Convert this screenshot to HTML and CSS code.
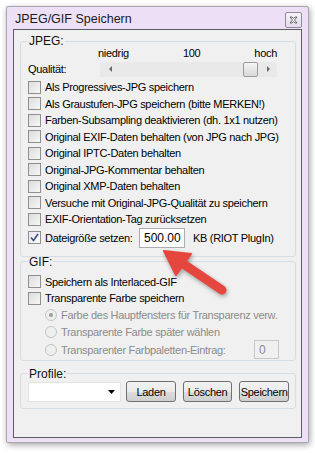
FILE: index.html
```html
<!DOCTYPE html>
<html lang="de">
<head>
<meta charset="utf-8">
<title>JPEG/GIF Speichern</title>
<link rel="stylesheet" href="styles.css">
</head>
<body>
<div class="window">
  <div class="titlebar">
    <span class="title">JPEG/GIF Speichern</span>
    <span class="close"><svg width="9" height="8" viewBox="0 0 9 8"><path d="M1 1h2l1.5 1.5L6 1h2L5.5 4 8 7H6L4.5 5.5 3 7H1l2.5-3z" fill="#fff" stroke="#555" stroke-width="0.9" stroke-linejoin="round"/></svg></span>
  </div>
  <div class="client">
    <fieldset class="group group-jpeg">
      <legend>JPEG:</legend>
      <div class="scale-labels"><span>niedrig</span><span>100</span><span>hoch</span></div>
      <div class="slider-row">
        <span class="slider-label">Qualität:</span>
        <div class="slider">
          <span class="arr arr-l"></span>
          <span class="track"><span class="thumb"></span></span>
          <span class="arr arr-r"></span>
        </div>
      </div>
      <div class="check"><span class="box"></span>Als Progressives-JPG speichern</div>
      <div class="check"><span class="box"></span>Als Graustufen-JPG speichern (bitte MERKEN!)</div>
      <div class="check"><span class="box"></span>Farben-Subsampling deaktivieren (dh. 1x1 nutzen)</div>
      <div class="check"><span class="box"></span>Original EXIF-Daten behalten (von JPG nach JPG)</div>
      <div class="check"><span class="box"></span>Original IPTC-Daten behalten</div>
      <div class="check"><span class="box"></span>Original-JPG-Kommentar behalten</div>
      <div class="check"><span class="box"></span>Original XMP-Daten behalten</div>
      <div class="check"><span class="box"></span>Versuche mit Original-JPG-Qualität zu speichern</div>
      <div class="check"><span class="box"></span>EXIF-Orientation-Tag zurücksetzen</div>
      <div class="check check-size">
        <span class="box checked"><svg width="9" height="9" viewBox="0 0 9 9"><path d="M1 4.5l2.5 3L8 1" fill="none" stroke="#3D4F7A" stroke-width="1.6"/></svg></span>
        <span class="size-label">Dateigröße setzen:</span>
        <span class="field field-size">500.00</span>
        <span class="unit">KB (RIOT PlugIn)</span>
      </div>
    </fieldset>
    <fieldset class="group group-gif">
      <legend>GIF:</legend>
      <div class="check"><span class="box"></span>Speichern als Interlaced-GIF</div>
      <div class="check"><span class="box"></span>Transparente Farbe speichern</div>
      <div class="radio"><span class="dot on"></span>Farbe des Hauptfensters für Transparenz verw.</div>
      <div class="radio"><span class="dot"></span>Transparente Farbe später wählen</div>
      <div class="radio radio-last"><span class="dot"></span>Transparenter Farbpaletten-Eintrag:<span class="field field-idx">0</span></div>
    </fieldset>
    <fieldset class="group group-profile">
      <legend>Profile:</legend>
      <div class="profile-row">
        <span class="combo"><svg width="7" height="4" viewBox="0 0 7 4"><path d="M0 0h7L3.5 4z" fill="#000"/></svg></span>
        <span class="btn">Laden</span>
        <span class="btn">Löschen</span>
        <span class="btn">Speichern</span>
      </div>
    </fieldset>
  </div>
</div>
<svg class="arrow" width="315" height="453" viewBox="0 0 315 453">
  <line x1="222" y1="290" x2="182" y2="263" stroke="#E5463D" stroke-width="9" stroke-linecap="round"/>
  <path d="M164 251 L191 254 L176 275 Z" fill="#E5463D" stroke="#E5463D" stroke-width="2" stroke-linejoin="round"/>
</svg>
</body>
</html>
```
FILE: styles.css
```css
html, body {
  margin: 0;
  padding: 0;
  background: #ffffff;
}
body {
  font-family: "Liberation Sans", Arial, sans-serif;
  font-size: 11px;
  letter-spacing: -0.3px;
  color: #000;
  width: 315px;
  height: 453px;
  position: relative;
  overflow: hidden;
}
.window {
  margin: 6px 0 0 6px;
  width: 301px;
  height: 435px;
  border: 1px solid #A9A6AD;
  border-radius: 2px;
  background: #EDE0F6;
  box-shadow: 1px 2px 6px rgba(0,0,0,0.35);
  display: flex;
  flex-direction: column;
}
.titlebar {
  height: 22px;
  display: flex;
  align-items: center;
  justify-content: space-between;
  padding: 0 6px 0 8px;
}
.title {
  font-size: 12.5px;
  letter-spacing: 0;
  color: #1a1a1a;
  margin-top: 1px;
}
.close {
  width: 15px;
  height: 14px;
  border: 1px solid #8E8B92;
  border-radius: 2px;
  background: linear-gradient(#F6F2FA, #E4DCEB);
  display: flex;
  align-items: center;
  justify-content: center;
  margin-top: 3px;
}
.client {
  margin: 0 6px 4px 6px;
  flex: 1;
  border: 1px solid #5D5B63;
  background: #F0F0F0;
  padding: 5px 5px 0 6px;
  display: flex;
  flex-direction: column;
}
.group {
  margin: 0;
  border: 1px solid #D6DEE3;
  border-radius: 3px;
  padding: 0 6px 0 7px;
  min-width: 0;
}
.group legend {
  padding: 0 1px;
  margin-left: 0;
  line-height: 12px;
  font-size: 12px;
  letter-spacing: 0;
  color: #111;
}
.group-jpeg {
  padding-bottom: 8px;
}
.scale-labels {
  height: 12px;
  line-height: 12px;
  display: flex;
  justify-content: space-between;
  margin-left: 70px;
  margin-right: 12px;
}
.slider-row {
  height: 20px;
  display: flex;
  align-items: center;
}
.slider-label {
  width: 72px;
  flex: none;
}
.slider {
  flex: 1;
  margin-right: 12px;
  height: 15px;
  background: #E9E9E9;
  display: flex;
  align-items: center;
}
.track {
  flex: 1;
  height: 15px;
  display: flex;
  justify-content: flex-end;
  padding-right: 3px;
}
.thumb {
  width: 13px;
  height: 13px;
  border: 1px solid #9B9B9B;
  border-radius: 2px;
  background: linear-gradient(#F4F4F4, #D9D9D9);
}
.arr {
  width: 0;
  height: 0;
  border-top: 3px solid transparent;
  border-bottom: 3px solid transparent;
  flex: none;
}
.arr-l {
  border-right: 3px solid #6a6a6a;
  margin: 0 7px 0 9px;
}
.arr-r {
  border-left: 3px solid #6a6a6a;
  margin: 0 7px 0 6px;
}
.check {
  height: 16.5px;
  display: flex;
  align-items: center;
  white-space: nowrap;
}
.box {
  width: 11px;
  height: 11px;
  border: 1px solid #8E8F8F;
  background: linear-gradient(135deg, #DCDCDC, #F7F7F7);
  margin-right: 4px;
  flex: none;
  display: flex;
  align-items: center;
  justify-content: center;
}
.box.checked {
  background: linear-gradient(135deg, #E6E6EE, #FAFAFC);
}
.check-size {
  height: 20px;
}
.size-label {
  width: 90px;
  flex: none;
}
.field {
  height: 18px;
  border: 1px solid #ABADB3;
  background: #fff;
  display: flex;
  align-items: center;
  box-sizing: border-box;
  flex: none;
}
.field-size {
  width: 46px;
  height: 20px;
  margin-left: 4px;
  padding-left: 4px;
  font-size: 12px;
  letter-spacing: 0;
}
.unit {
  margin-left: 8px;
  flex: none;
}
.group-gif {
  padding-top: 7px;
  padding-bottom: 1px;
}
.group-gif legend {
  line-height: 10px;
}
.radio {
  height: 17px;
  display: flex;
  align-items: center;
  color: #8B8B8B;
  padding-left: 17px;
  white-space: nowrap;
}
.radio-last {
  height: 18px;
}
.dot {
  width: 10px;
  height: 10px;
  border-radius: 50%;
  border: 1px solid #C4C4C4;
  background: #EFEFEF;
  margin-right: 4px;
  flex: none;
  display: flex;
  align-items: center;
  justify-content: center;
}
.dot.on::after {
  content: "";
  width: 4px;
  height: 4px;
  border-radius: 50%;
  background: #9C9C9C;
}
.field-idx {
  width: 25px;
  height: 19px;
  margin-left: auto;
  margin-right: 10px;
  padding-left: 4px;
  color: #8B8B8B;
  background: #F0F0F0;
  border-color: #C8C8C8;
  font-size: 12px;
  letter-spacing: 0;
}
.group-profile {
  margin-top: 7px;
  padding-top: 1px;
  padding-bottom: 5px;
}
.profile-row {
  height: 22px;
  display: flex;
  align-items: center;
}
.combo {
  width: 94px;
  height: 20px;
  box-sizing: border-box;
  border: 1px solid #E3E3E3;
  background: #fff;
  display: flex;
  align-items: center;
  justify-content: flex-end;
  padding-right: 5px;
  margin-right: 5px;
}
.btn {
  width: 50px;
  height: 21px;
  box-sizing: border-box;
  border: 1px solid #707070;
  border-radius: 3px;
  background: linear-gradient(#F2F2F2 0%, #EBEBEB 50%, #DDDDDD 51%, #CFCFCF 100%);
  display: flex;
  align-items: center;
  justify-content: center;
  margin-left: 7px;
  font-size: 11px;
}
.combo + .btn {
  margin-left: 0;
}
.arrow {
  position: absolute;
  left: 0;
  top: 0;
  filter: drop-shadow(1px 2px 2px rgba(0,0,0,0.35));
  pointer-events: none;
}
```
